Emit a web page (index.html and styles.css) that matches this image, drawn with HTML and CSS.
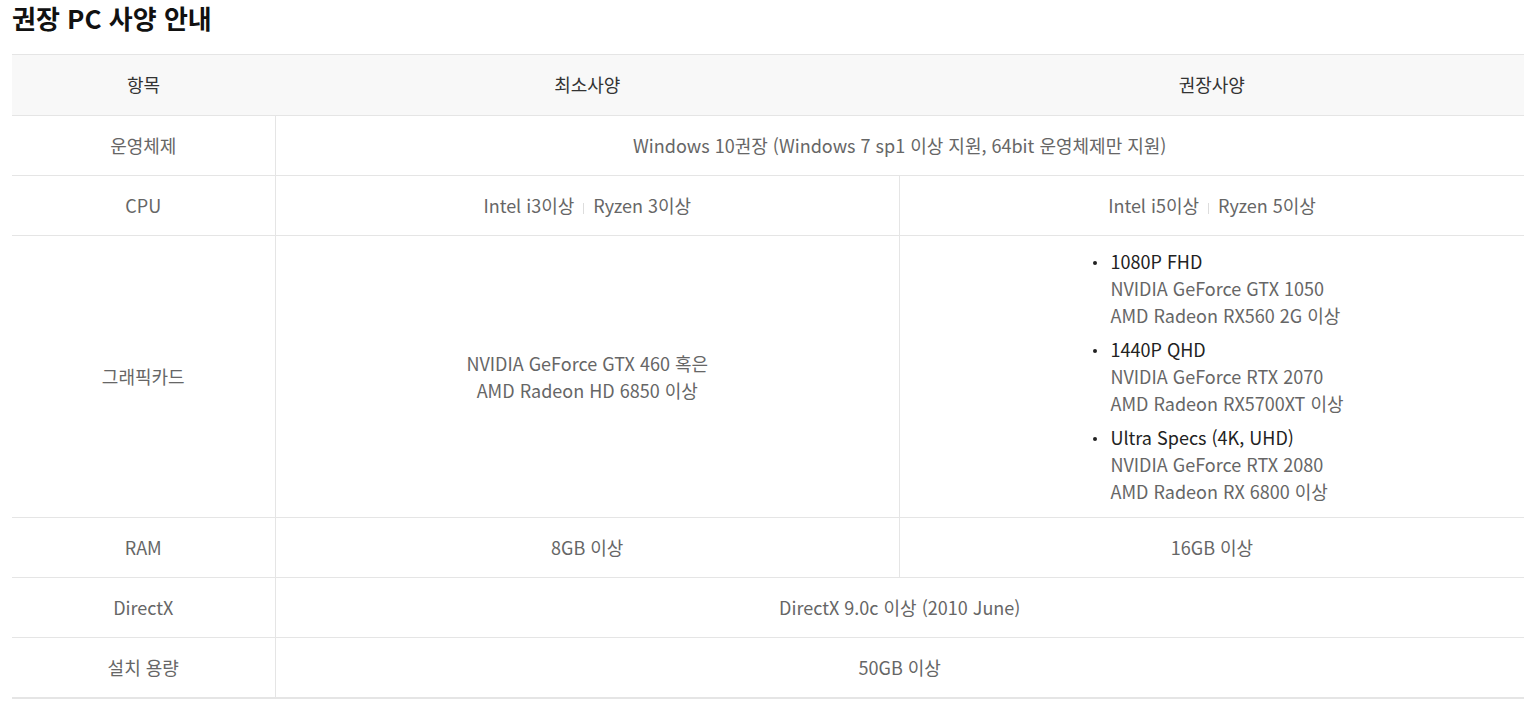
FILE: index.html
```html
<!DOCTYPE html>
<html lang="ko">
<head>
<meta charset="utf-8">
<link rel="stylesheet" href="styles.css">
</head>
<body>
<div class="wrap">
  <h2 class="title">권장 PC 사양 안내</h2>
  <table class="spec">
    <colgroup>
      <col class="c1"><col class="c2"><col class="c3">
    </colgroup>
    <thead>
      <tr><th>항목</th><th>최소사양</th><th>권장사양</th></tr>
    </thead>
    <tbody>
      <tr><th>운영체제</th><td colspan="2">Windows 10권장 (Windows 7 sp1 이상 지원, 64bit 운영체제만 지원)</td></tr>
      <tr><th>CPU</th><td>Intel i3이상<span class="sep"></span>Ryzen 3이상</td><td>Intel i5이상<span class="sep"></span>Ryzen 5이상</td></tr>
      <tr class="gpu"><th>그래픽카드</th><td>NVIDIA GeForce GTX 460 혹은<br>AMD Radeon HD 6850 이상</td>
        <td>
          <ul class="glist">
            <li><strong>1080P FHD</strong><span>NVIDIA GeForce GTX 1050</span><span>AMD Radeon RX560 2G 이상</span></li>
            <li><strong>1440P QHD</strong><span>NVIDIA GeForce RTX 2070</span><span>AMD Radeon RX5700XT 이상</span></li>
            <li><strong>Ultra Specs (4K, UHD)</strong><span>NVIDIA GeForce RTX 2080</span><span>AMD Radeon RX 6800 이상</span></li>
          </ul>
        </td></tr>
      <tr><th>RAM</th><td>8GB 이상</td><td>16GB 이상</td></tr>
      <tr><th>DirectX</th><td colspan="2">DirectX 9.0c 이상 (2010 June)</td></tr>
      <tr><th>설치 용량</th><td colspan="2">50GB 이상</td></tr>
    </tbody>
  </table>
</div>
</body>
</html>
```
FILE: styles.css
```css
html, body { margin: 0; padding: 0; background: #fff; }
body { font-family: "Noto Sans CJK KR", "Noto Sans", sans-serif; color: #666; }
.wrap { padding: 0 15px 0 12px; }
.title { margin: 0; padding-top: 1px; font-size: 26px; line-height: 34px; font-weight: 700; color: #111; }
.spec { width: 100%; margin-top: 19px; border-collapse: collapse; table-layout: fixed; font-size: 18px; line-height: 27px; }
.c1 { width: 263px; }
.spec th, .spec td { padding: 16px 10px; text-align: center; vertical-align: middle; border-top: 1px solid #e5e5e5; border-bottom: 1px solid #e5e5e5; font-weight: 400; }
.spec td, .spec tbody th + td { border-left: 1px solid #e5e5e5; }
.spec thead th { background: #f8f8f8; color: #333; border-left: 0; padding-bottom: 17px; }
.spec tbody th { color: #666; }
.spec tbody tr:last-child th, .spec tbody tr:last-child td { border-bottom: 2px solid #e5e5e5; }
.sep { display: inline-block; width: 1px; height: 11px; background: #ddd; margin: 0 9px; vertical-align: -1px; }
.gpu td { padding-top: 12px; padding-bottom: 12px; }
.glist { display: inline-block; margin: 0; padding: 0 0 0 30px; text-align: left; list-style: none; }
.glist li { position: relative; margin-bottom: 7px; }
.glist li::before { content: ""; position: absolute; left: -17px; top: 13px; width: 4px; height: 4px; border-radius: 50%; background: #222; }
.glist li:last-child { margin-bottom: 0; }
.glist strong { display: block; font-weight: 400; color: #222; }
.glist span { display: block; }
```
